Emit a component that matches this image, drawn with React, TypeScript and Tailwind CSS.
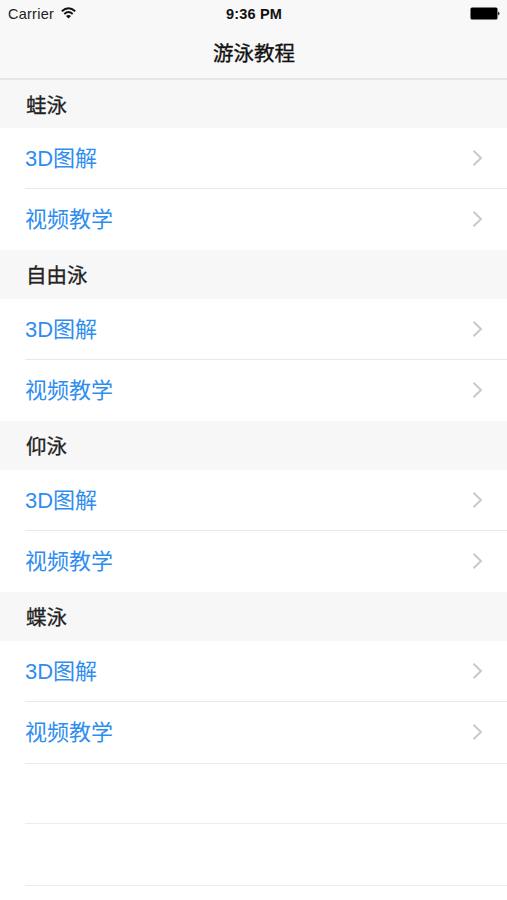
import React from "react";

const sections = ["蛙泳", "自由泳", "仰泳", "蝶泳"];

function Row({ label, divided = false }: { label: string; divided?: boolean }) {
  return (
    <div className={"ml-[25px] flex h-[61px] items-center justify-between pr-[24px] " + (divided ? "border-b border-[#e8e8e8] pt-px" : "")}>
      <span className="text-[22px] leading-[30px] text-[#2f8df0]">{label}</span>
      <svg className="-mt-[2px]" width="11" height="18" viewBox="0 0 11 18" fill="none" stroke="#c9c9c9" strokeWidth="2">
        <path d="M1.5 1.7 L9 9 L1.5 16.3" />
      </svg>
    </div>
  );
}

export default function App() {
  return (
    <div className="h-[900px] w-[507px] overflow-hidden bg-white font-['Liberation_Sans','Noto_Sans_CJK_SC',sans-serif]">
      <header className="flex h-[80px] flex-col border-b-2 border-[#e6e6e6] bg-[#f8f8f8]">
        <div className="grid h-[28px] shrink-0 grid-cols-3 items-center pl-[8px] pr-[7px] text-[14.5px] text-[#222]">
          <div className="flex items-center gap-[7px]">
            <span className="pt-[2px] tracking-[0.25px]">Carrier</span>
            <svg className="-mt-[2px]" width="15" height="12" viewBox="0 0 15 12" fill="none" stroke="#111" strokeWidth="1.9">
              <path d="M0.8 4.3 Q7.5 -1.8 14.2 4.3 M3.3 7 Q7.5 3.2 11.7 7" />
              <path d="M7.5 11.5 L5 9 Q7.5 6.8 10 9 Z" fill="#111" stroke="none" />
            </svg>
          </div>
          <span className="pt-[2px] text-center font-bold tracking-[0.2px] text-[#111]">9:36 PM</span>
          <svg className="-mt-px justify-self-end" width="30" height="13" viewBox="0 0 30 13">
            <rect x="0.5" y="0.5" width="27" height="12" rx="1.5" fill="#000" />
            <path d="M28.2 4.4 Q30.8 6.5 28.2 8.6 Z" fill="#000" />
          </svg>
        </div>
        <h1 className="shrink-0 pl-px text-center text-[20.5px] font-normal leading-[52px] text-[#111] [-webkit-text-stroke:0.35px_#111]">游泳教程</h1>
      </header>
      <main className="-mt-px">
        {sections.map((s) => (
          <section key={s} className="first:border-t first:border-[#e6e6e6] first:[&>h2]:h-[48px]">
            <h2 className="flex h-[49px] items-center bg-[#f7f7f7] pl-[26px] pt-[4px] text-[20.5px] font-normal text-[#222] [-webkit-text-stroke:0.3px_#222]">{s}</h2>
            <Row label="3D图解" divided />
            <Row label="视频教学" />
          </section>
        ))}
        <div className="ml-[25px] h-[61px] border-y border-[#ececec]" />
        <div className="ml-[25px] h-[62px] border-b border-[#ececec]" />
      </main>
    </div>
  );
}
